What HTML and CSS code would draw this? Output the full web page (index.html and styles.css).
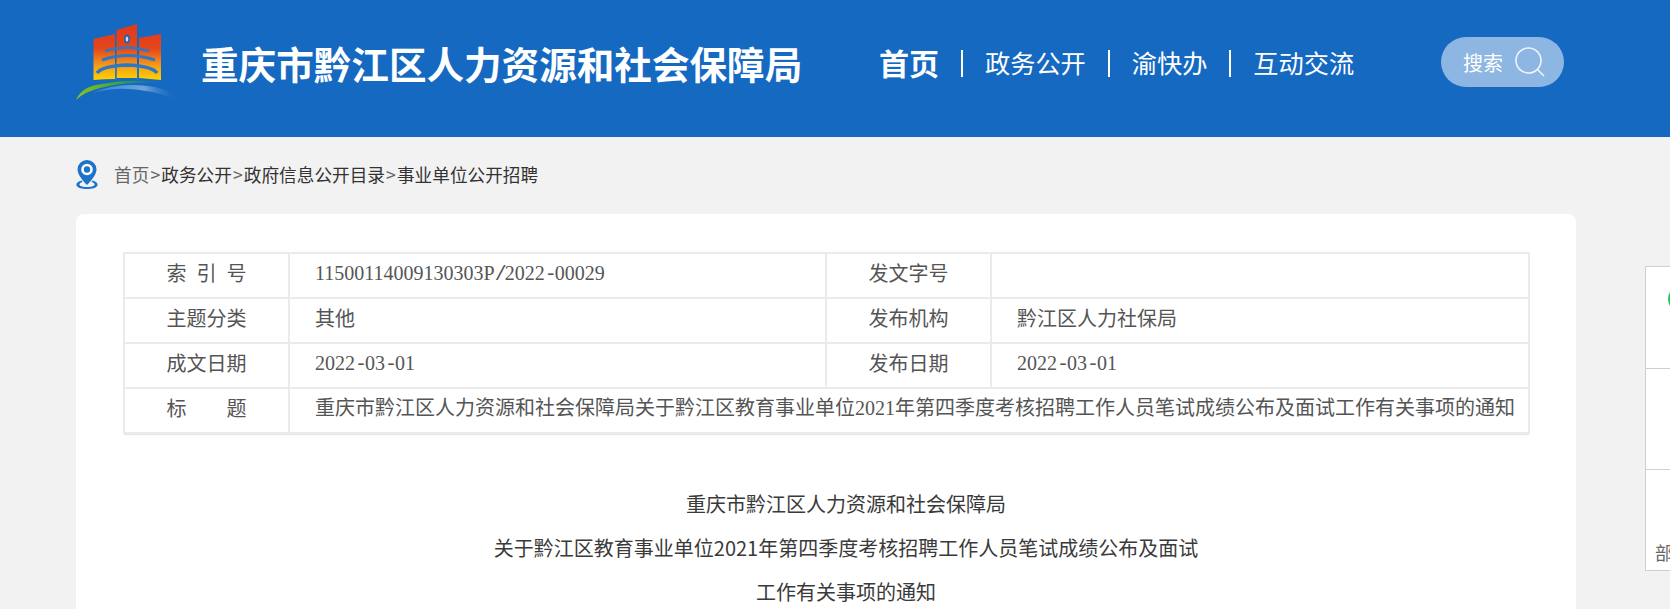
FILE: index.html
```html
<!DOCTYPE html>
<html lang="zh-CN">
<head>
<meta charset="utf-8">
<title>重庆市黔江区人力资源和社会保障局</title>
<link rel="stylesheet" href="styles.css">
</head>
<body>
<header class="header">
  <div class="header-inner">
    <svg class="logo" viewBox="0 0 110 90" width="110" height="90">
      <defs>
        <linearGradient id="lg" gradientUnits="userSpaceOnUse" x1="0" y1="8" x2="0" y2="62">
          <stop offset="0" stop-color="#e1391c"/><stop offset=".42" stop-color="#e4471c"/><stop offset=".72" stop-color="#f5981a"/><stop offset="1" stop-color="#ffd300"/>
        </linearGradient>
        <linearGradient id="lb" x1="0" y1="0" x2="1" y2="0">
          <stop offset="0" stop-color="#8cc21f"/><stop offset=".5" stop-color="#3aa53a"/><stop offset="1" stop-color="#1a7f90" stop-opacity=".3"/>
        </linearGradient>
        <linearGradient id="lw" x1="0" y1="0" x2="1" y2="0">
          <stop offset="0" stop-color="#2f86d6"/><stop offset=".6" stop-color="#6ea3da"/><stop offset="1" stop-color="#1569c1" stop-opacity=".1"/>
        </linearGradient>
      </defs>
      <path fill="url(#lg)" d="M23.500 21 45 16V61Q34 61 23.500 62Z"/>
      <path fill="url(#lg)" d="M46.500 12 67 6V60H46.500Z"/>
      <path fill="url(#lg)" d="M69 20 91 16V62L69 60Z"/>
      <ellipse cx="57" cy="21" rx="3" ry="4.500" fill="#1569c1"/>
      <ellipse cx="57" cy="21" rx="1.300" ry="2.500" fill="#f0d8c8"/>
      <path fill="none" stroke="#2a78c8" stroke-width="2.400" d="M35 33Q57 26 79 33"/>
      <path fill="none" stroke="#2a78c8" stroke-width="3" d="M32 42Q57 33 85 42"/>
      <path fill="none" stroke="#2a78c8" stroke-width="3.400" d="M27 55Q32 48 57 47Q82 48 87 55"/>
      <path d="M45.750 47V62M68 47V62" stroke="#2a78c8" stroke-width="1.500" fill="none"/>
      <path fill="url(#lb)" d="M6 82Q12 68 32 66Q62 60 92 65Q58 63 30 70Q14 74 6 82Z"/>
      <path fill="url(#lw)" d="M23 75Q60 64 108 82Q102 71 78 68Q46 64 23 75Z"/>
    </svg>
    <h1 class="site-title">重庆市黔江区人力资源和社会保障局</h1>
    <nav class="nav">
      <a class="nav-item active">首页</a><span class="sep"></span>
      <a class="nav-item">政务公开</a><span class="sep"></span>
      <a class="nav-item">渝快办</a><span class="sep"></span>
      <a class="nav-item">互动交流</a>
    </nav>
    <div class="search">
      <span class="search-label">搜索</span>
      <svg class="search-icon" viewBox="0 0 30 30" width="30" height="30"><circle cx="13.500" cy="13.500" r="12.500" fill="none" stroke="#fff" stroke-opacity=".85" stroke-width="1.600"/><path d="M22.500 22.500 29 29" stroke="#fff" stroke-opacity=".85" stroke-width="1.600" fill="none"/></svg>
    </div>
  </div>
</header>

<div class="crumbs">
  <svg class="pin" viewBox="0 0 22 29" width="22" height="29">
    <path fill="#1d72c9" d="M11 0a9.500 9.500 0 0 0-9.500 9.500C1.500 16 11 25 11 25s9.500-9 9.500-15.500A9.500 9.500 0 0 0 11 0Z"/>
    <circle cx="11" cy="9.500" r="5.800" fill="#fff"/><circle cx="11" cy="9.500" r="3.200" fill="#1d72c9"/>
    <path fill="#1d72c9" d="M5.500 20.500C1.500 21.500 0 23.500 0.500 25.500C1.500 28 6 29 11 29s9.500-1 10.500-3.500c.5-2-1-4-5-5l-1 1.500c2.500.7 3.500 2 3 3-.8 1.400-4 2-7.500 2s-6.700-.6-7.500-2c-.5-1 .5-2.300 3-3Z"/>
  </svg>
  <span class="crumb-muted">首页</span><span class="crumb-sep">&gt;</span><span>政务公开</span><span class="crumb-sep">&gt;</span><span>政府信息公开目录</span><span class="crumb-sep">&gt;</span><span>事业单位公开招聘</span>
</div>

<main class="card">
  <table class="meta">
    <colgroup><col class="c1"><col class="c2"><col class="c3"><col class="c4"></colgroup>
    <tr><th>索<span class="gap-s"></span>引<span class="gap-s"></span>号</th><td class="num">11500114009130303P<span class="hw">/</span>2022<span class="hw">-</span>00029</td><th>发文字号</th><td></td></tr>
    <tr><th>主题分类</th><td>其他</td><th>发布机构</th><td>黔江区人力社保局</td></tr>
    <tr><th>成文日期</th><td class="num">2022<span class="hw">-</span>03<span class="hw">-</span>01</td><th>发布日期</th><td class="num">2022<span class="hw">-</span>03<span class="hw">-</span>01</td></tr>
    <tr><th>标<span class="gap"></span>题</th><td colspan="3" class="title-cell">重庆市黔江区人力资源和社会保障局关于黔江区教育事业单位<span class="num">2021</span>年第四季度考核招聘工作人员笔试成绩公布及面试工作有关事项的通知</td></tr>
  </table>
  <div class="article-title">
    <p>重庆市黔江区人力资源和社会保障局</p>
    <p>关于黔江区教育事业单位2021年第四季度考核招聘工作人员笔试成绩公布及面试</p>
    <p>工作有关事项的通知</p>
  </div>
</main>

<aside class="side">
  <div class="side-row first"><span class="dot"></span></div>
  <div class="side-row"></div>
  <div class="side-row last"><span class="side-text">部</span></div>
</aside>
</body>
</html>
```
FILE: styles.css
```css
* { box-sizing: border-box; }
html, body { margin: 0; padding: 0; height: 609px; overflow: hidden; }
body { background: #f2f2f2; font-family: "Noto Sans CJK SC", "Noto Sans", sans-serif; color: #333; position: relative; }
.header { height: 137px; background: #1569c1; }
.header-inner { display: flex; align-items: flex-start; padding-left: 70px; height: 100%; }
.logo { margin-top: 18px; flex: none; }
.site-title { margin: 37px 0 0 21px; width: 660px; color: #fff; font-size: 37.6px; line-height: 52px; font-weight: 700; white-space: nowrap; }
.nav { display: flex; align-items: center; margin: 42px 0 0 18px; height: 42px; color: #fff; font-size: 25.2px; }
.nav-item { line-height: 42px; margin-top: -2px; white-space: nowrap; }
.nav-item.active { font-size: 30px; font-weight: 700; }
.sep { width: 2px; height: 27px; background: #fff; margin: 0 22px; }
.search { position: absolute; left: 1441px; top: 37px; width: 123px; height: 50px; border-radius: 25px; background: #8db6e2; color: #fff; display: flex; align-items: center; padding-left: 22px; font-size: 20px; gap: 12px; }
.search-label { white-space: nowrap; }
.crumbs { display: flex; align-items: center; height: 77px; padding: 0 0 2px 76px; font-size: 17.65px; color: #333; white-space: nowrap; }
.pin { margin-right: 16px; flex: none; }
.crumb-muted, .crumb-sep { color: #666; }
.crumb-sep { display: inline-block; width: 12px; text-align: center; }
.card { background: #fff; margin-left: 76px; width: 1500px; height: 395px; border-radius: 8px 8px 0 0; padding: 38px 47px 0; }
.meta { width: 1405px; table-layout: fixed; border-collapse: collapse; border: 2px solid #ebebeb; box-shadow: 0 2px 1px -1px #e6e6e6; font-size: 20px; color: #555; }
.meta col.c1 { width: 165px; }
.meta col.c2 { width: 537px; }
.meta col.c3 { width: 165px; }
.meta col.c4 { width: 538px; }
.meta th, .meta td { border: 2px solid #ebebeb; height: 45px; padding: 0 0 6px; font-weight: 400; line-height: 28px; white-space: nowrap; }
.meta th { text-align: center; }
.meta td { padding-left: 25px; }
.meta td.num { padding-bottom: 3px; }
.meta .title-cell { padding-left: 25px; }
.num { font-family: "Liberation Serif", serif; font-size: 20px; }
.hw { display: inline-block; width: 10px; text-align: center; font-family: "Liberation Mono", monospace; }
.gap { display: inline-block; width: 40px; }
.gap-s { display: inline-block; width: 10px; }
.article-title { margin-top: 55px; padding-left: 40px; width: 1406px; font-size: 20px; color: #3a3a3a; text-align: center; }
.article-title p { margin: 0 0 15px; line-height: 29px; white-space: nowrap; }
.side { position: absolute; left: 1645px; top: 266px; width: 120px; height: 305px; background: #fff; border: 1px solid #cfcfcf; }
.side-row { height: 101px; border-bottom: 1px solid #cfcfcf; position: relative; overflow: hidden; }
.side-row.first { height: 102px; }
.side-row.last { border-bottom: 0; }
.dot { position: absolute; left: 22px; top: 19px; width: 26px; height: 26px; border-radius: 50%; background: #25c75c; }
.side-text { position: absolute; left: 9px; top: 70px; font-size: 18px; color: #666; line-height: 24px; }
```
